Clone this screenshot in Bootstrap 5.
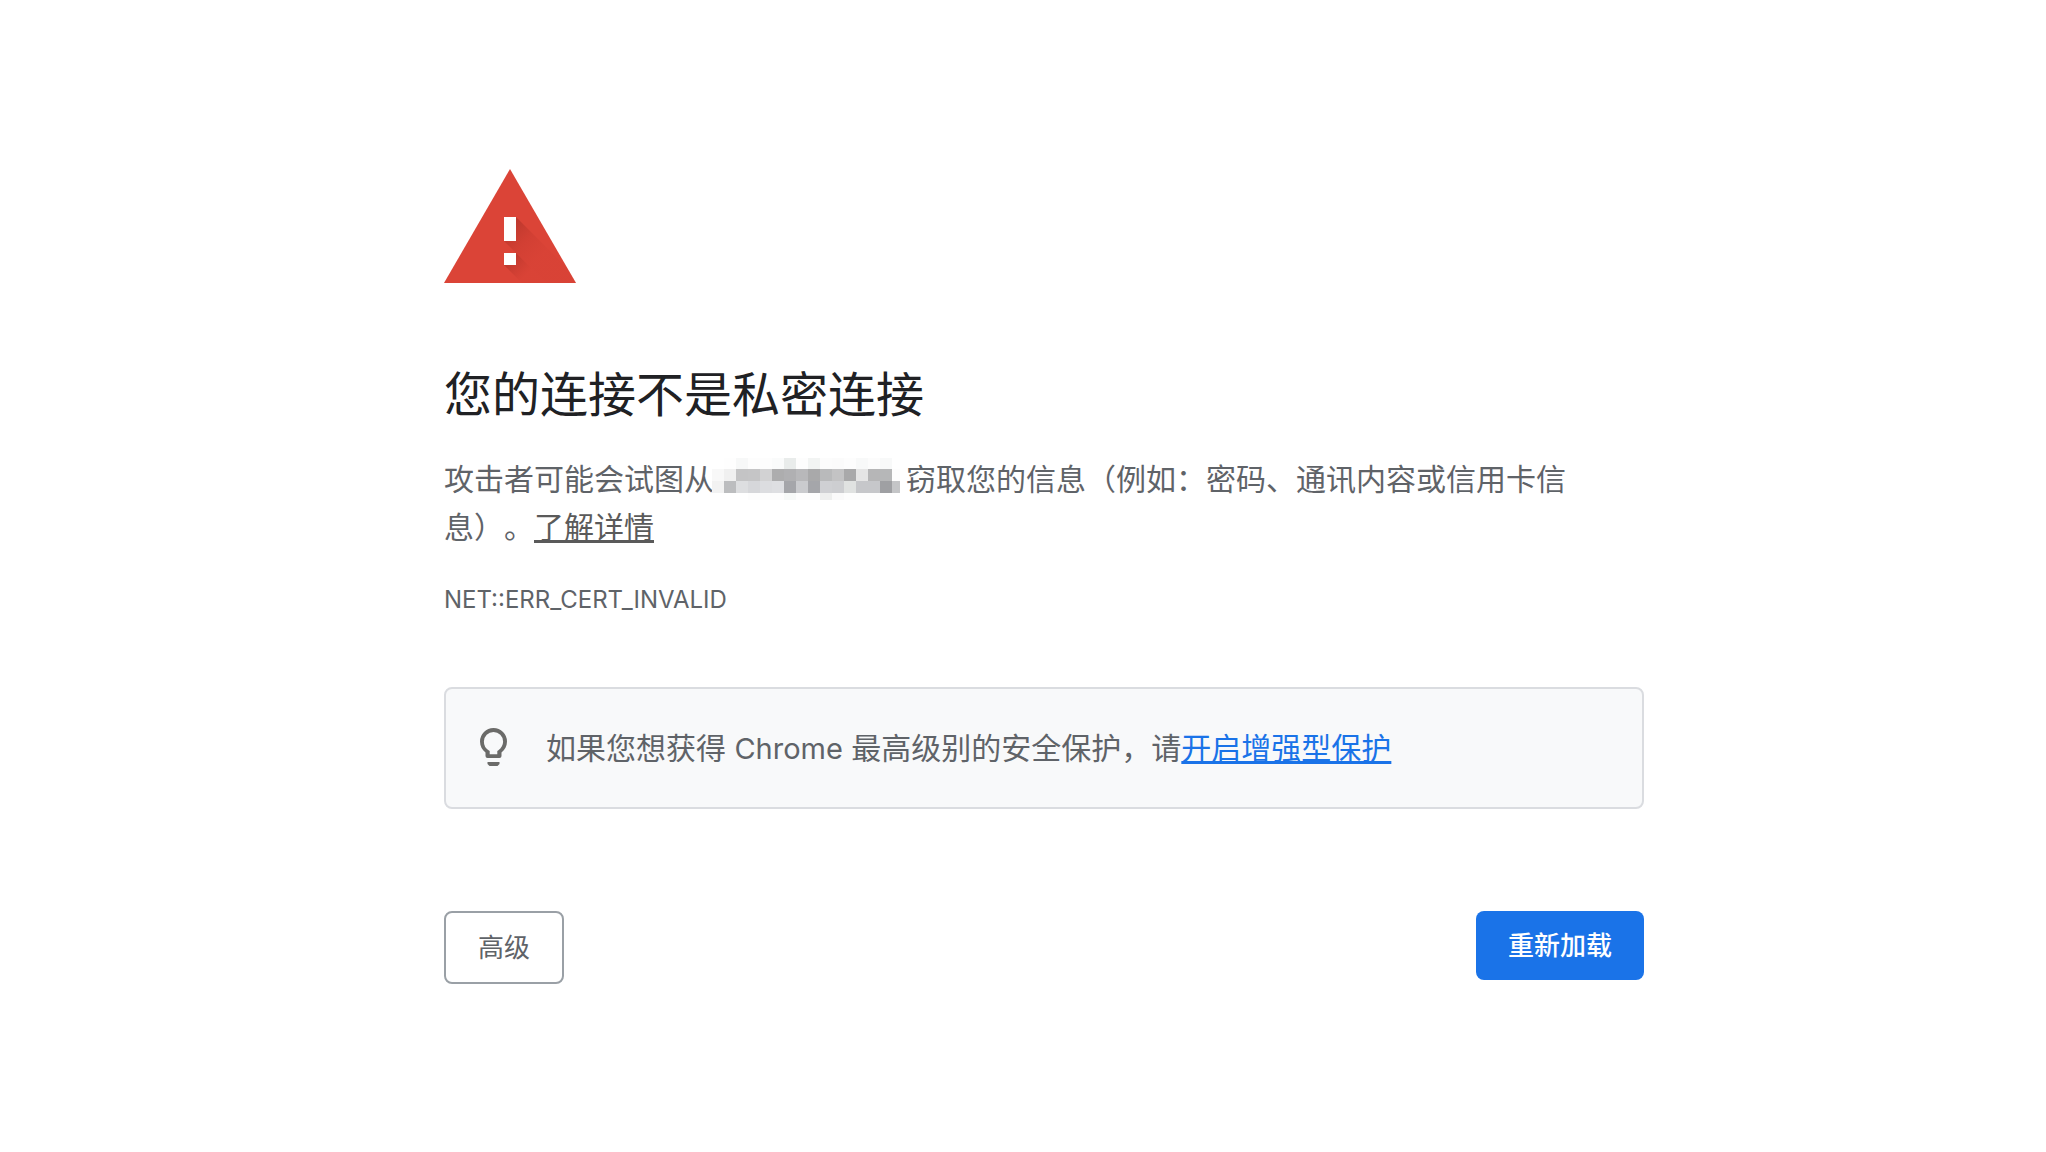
<!DOCTYPE html>
<html lang="zh-CN">
<head>
<meta charset="utf-8">
<meta name="viewport" content="width=device-width, initial-scale=1">
<title>隐私设置错误</title>
<link href="https://cdn.jsdelivr.net/npm/bootstrap@5.3.0/dist/css/bootstrap.min.css" rel="stylesheet">
<style>
  body { font-family: Inter, "Noto Sans CJK SC", sans-serif; color: #5f6368; background: #fff; text-spacing-trim: space-all; }
  .page-wrap { padding: 169px 0 96px 42px; }
  .interstitial { max-width: 1200px; }
  .warning-icon { margin-bottom: 83px; }
  .headline { font-size: 48px; line-height: 58px; font-weight: 400; color: #202124; margin-bottom: 31px; }
  .message { font-size: 30px; line-height: 48px; }
  .message-link { color: #5a5a5a; }
  .message-link, .enhanced-link { text-decoration-thickness: 3px; text-underline-offset: 2px; text-decoration-skip-ink: none; }
  .enhanced-link { color: #1a73e8; }
  .error-code { font-size: 24px; line-height: 36px; margin: 31px 0 69px; }
  .tip-box { border: 2px solid #dadce0; border-radius: 8px; background: #f8f9fa; padding: 35px 34px; gap: 38px; font-size: 30px; line-height: 48px; margin-bottom: 102px; }
  .tip-latin { font-size: 29px; line-height: 1; }
  .action { font-size: 26px; line-height: 39px; border-radius: 8px; padding: 15px 32px; }
  .action-secondary { border: 2px solid #9aa0a6; color: #5f6368; background: #fff; }
  .action-primary { border: 0; color: #fff; background: #1a73e8; font-weight: 500; }
  .masked-host { overflow: visible; vertical-align: -10px; }
</style>
<script src="https://cdn.jsdelivr.net/npm/bootstrap@5.3.0/dist/js/bootstrap.bundle.min.js" defer></script>
</head>
<body>
<div class="page-wrap">
<main class="interstitial mx-auto">
  <svg class="warning-icon d-block" width="132" height="114" viewBox="0 0 132 114" aria-hidden="true">
    <defs>
      <linearGradient id="shade1" gradientUnits="userSpaceOnUse" x1="62" y1="62" x2="92" y2="92"><stop offset="0" stop-color="#b5352b" stop-opacity=".8"/><stop offset=".5" stop-color="#c5392e" stop-opacity=".4"/><stop offset="1" stop-color="#cf3d32" stop-opacity=".2"/></linearGradient>
      <linearGradient id="shade2" gradientUnits="userSpaceOnUse" x1="64" y1="92" x2="80" y2="108"><stop offset="0" stop-color="#b5352b" stop-opacity=".8"/><stop offset="1" stop-color="#c93a2f" stop-opacity=".1"/></linearGradient>
      <clipPath id="tri"><path d="M66 0 132 114H0z"/></clipPath>
    </defs>
    <path d="M66 0 132 114H0z" fill="#db4437"/>
    <g clip-path="url(#tri)">
      <path d="M72 48 132 108v6H102L60 72z" fill="url(#shade1)"/>
      <path d="M72 84 102 114H78L60 96z" fill="url(#shade2)"/>
    </g>
    <path d="M60 48h12v24H60zM60 84h12v12H60z" fill="#fff"/>
  </svg>

  <h1 class="headline">您的连接不是私密连接</h1>
  <p class="message mb-0">攻击者可能会试图从<svg class="masked-host" width="192" height="42" viewBox="0 0 192 42" role="img" aria-label="已隐藏的网址" shape-rendering="crispEdges">
    <g id="mosaic"></g>
  </svg>窃取您的信息（例如：密码、通讯内容或信用卡信息）。<a class="message-link" href="#">了解详情</a></p>
  <div class="error-code">NET::ERR_CERT_INVALID</div>

  <div class="tip-box d-flex align-items-center">
    <svg class="flex-shrink-0" width="28" height="40" viewBox="0 0 28 40" fill="#6b6b69" aria-hidden="true">
      <path fill-rule="evenodd" d="M13.500 0A13.500 13.500 0 0 0 0 13.500C0 18 2.100 22 5.500 24.500V28a2 2 0 0 0 2 2h12a2 2 0 0 0 2-2v-3.500c3.400-2.500 5.500-6.500 5.500-11A13.500 13.500 0 0 0 13.500 0zm4.900 22.200-1.100.8v3.300H9.700V23l-1.100-.8A10 10 0 0 1 3.900 13.500a9.600 9.600 0 0 1 19.200 0c0 3.500-1.700 6.600-4.700 8.700z"/>
      <path d="M7.500 34h12v2l-2 2h-8l-2-2z"/>
    </svg>
    <div>如果您想获得 <span class="tip-latin">Chrome</span> 最高级别的安全保护，请<a class="enhanced-link" href="#">开启增强型保护</a></div>
  </div>

  <div class="d-flex justify-content-between align-items-start">
    <button type="button" class="btn action action-secondary">高级</button>
    <button type="button" class="btn action action-primary">重新加载</button>
  </div>
</main>
</div>
<script>
  // Pixelated host name: rows of 12px cells, null leaves a cell empty.
  const rows = [
    [null,'fefefe','f7f8f8','fdfdfd','fdfdfd','fafbfb','e9eceb','fdfdfd','f2f4f3','fcfcfc','fbfbfb','fdfdfd','f8f9f9','fcfcfc','f8f9f9',null],
    ['f8f8f8','f0f0f0','c4c4c5','c5c5c6','d2d2d3','adadae','b0b0b2','b8b8ba','a9a9aa','b9babb','c3c3c4','a9a9aa','e5e5e5','b6b6b7','b6b7b8','fdfdfd'],
    ['f2f2f2','bcbdbf','dddee0','d6d7da','dcdde0','dedfe2','a5a6aa','cacbce','a5a6aa','cfd0d3','cdced1','e0e2e1','c6c7ca','c6c7ca','9fa0a3','c4c5c7'],
    [null,null,null,'fdfdfd','fdfdfd','fdfdfd','f7f9f8','fdfdfd','fdfdfd','eeefee','fafafa','fdfdfd','fdfdfd','fdfdfd',null,null]
  ];
  const tops = [0, 11, 23, 35], heights = [11, 12, 12, 7];
  document.getElementById('mosaic').innerHTML = rows.map((row, r) => row.map((c, i) =>
    c ? `<rect x="${i * 12 - 2}" y="${tops[r]}" width="${i === 15 ? 8 : 12}" height="${heights[r]}" fill="#${c}"/>` : '').join('')).join('');
</script>
</body>
</html>
